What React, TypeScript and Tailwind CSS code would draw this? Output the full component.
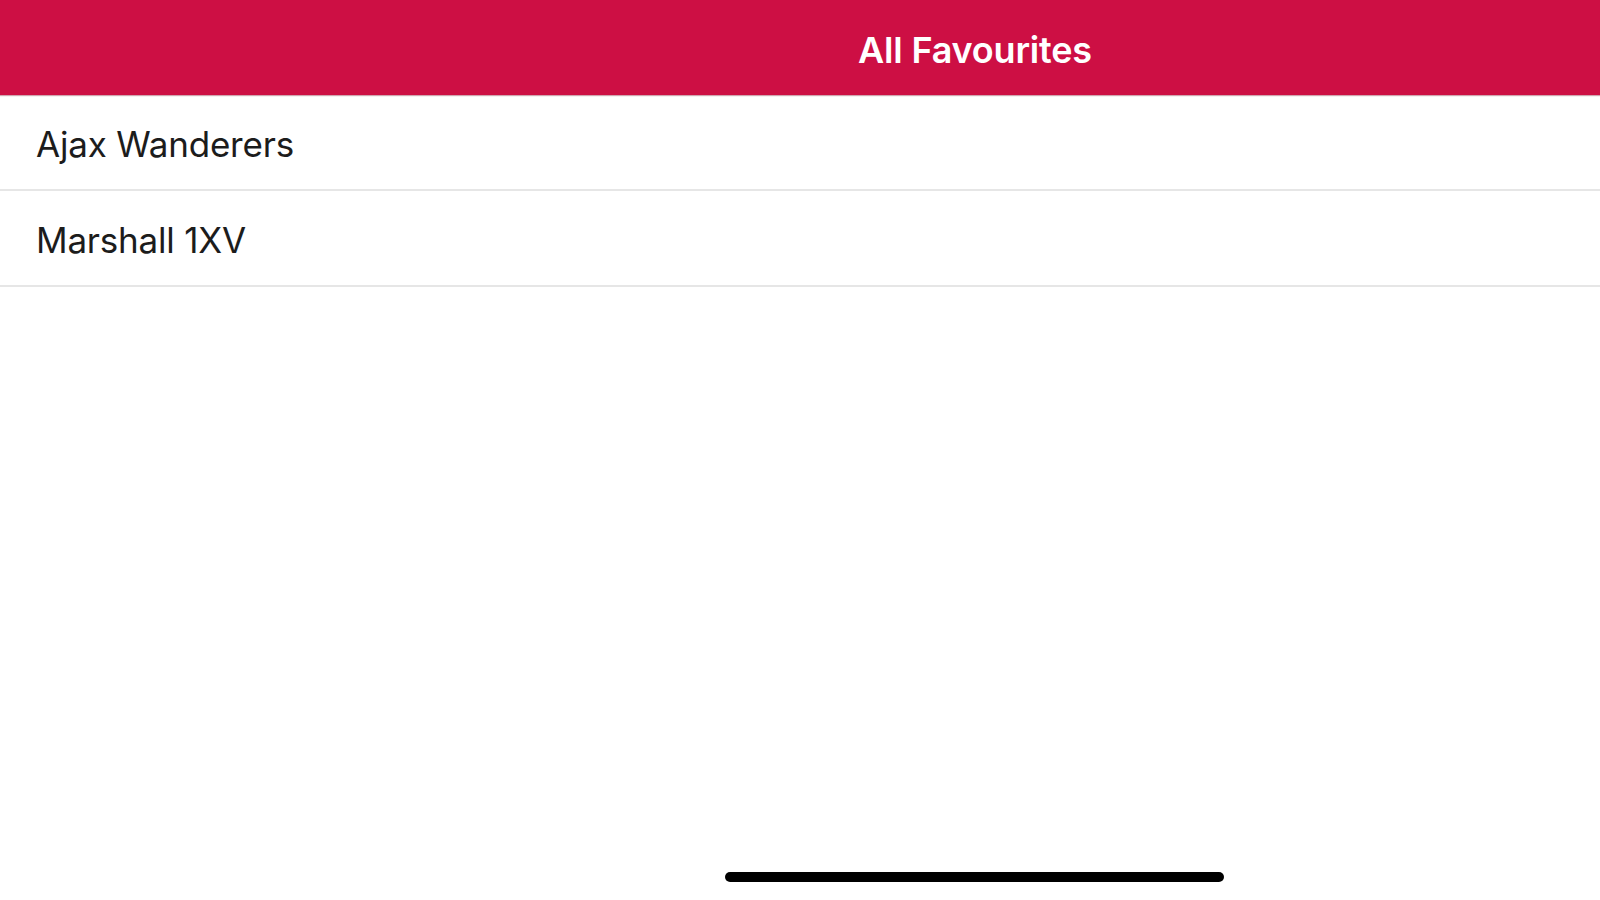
import React from "react";

const favourites = ["Ajax Wanderers", "Marshall 1XV"];

export default function App() {
  return (
    <div
      className="flex h-[900px] w-[1600px] flex-col bg-white"
      style={{ fontFamily: "Inter, 'Noto Sans', sans-serif" }}
    >
      {/* Nav bar */}
      <div className="flex h-[95px] shrink-0 items-center justify-center bg-[#cd0f44] pl-[350px] pt-[4px] shadow-[0_1px_1px_rgba(120,0,30,0.35)]">
        <span className="text-[36px] font-semibold leading-none tracking-[-0.2px] text-white">
          All Favourites
        </span>
      </div>

      {/* List */}
      <div className="flex flex-col">
        {favourites.map((name) => (
          <div
            key={name}
            className="flex h-[96px] items-center border-b-2 border-[#e6e6e6] pl-[36px] pt-[4px]"
          >
            <span className="text-[35px] leading-none tracking-[-0.2px] text-[#1c1c1c]">
              {name}
            </span>
          </div>
        ))}
      </div>

      <div className="flex-1" />

      {/* Home indicator */}
      <div className="flex h-[28px] shrink-0 items-start justify-center pl-[349px]">
        <div className="h-[10px] w-[499px] rounded-full bg-black" />
      </div>
    </div>
  );
}
